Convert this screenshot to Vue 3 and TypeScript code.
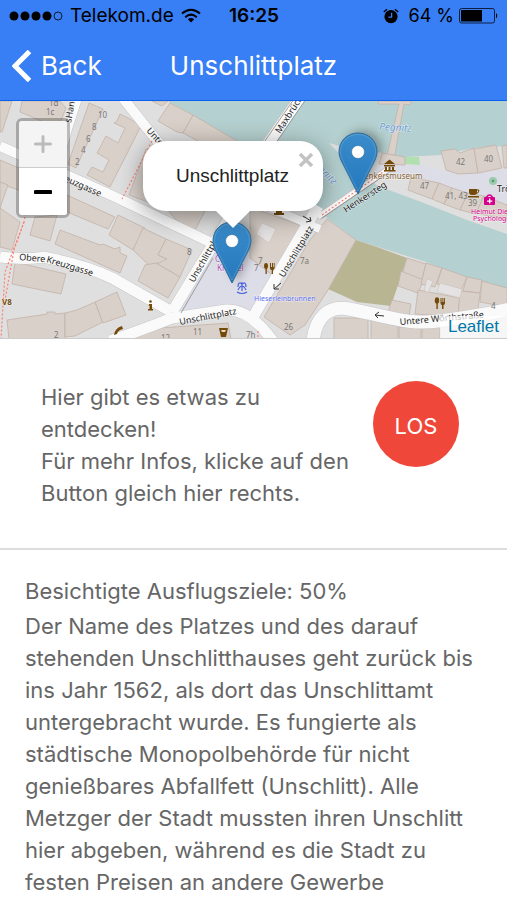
<script setup lang="ts">
import { ref } from 'vue'

interface MapLabel {
  text: string
  x: number
  y: number
  angle?: number
  kind?: string
}

const popupOpen = ref(true)
const place = 'Unschlittplatz'
const visited = 50

const buildings: string[] = [
  '22,101 60,101 66,108 58,128 20,112',
  '0,101 12,101 2,132 0,132',
  '89,103 103,109 76,168 68,164',
  '117,121 120,114 130,119 141,126 110,187 87,175 92,167 103,172 109,160 97,153 106,136 118,143 125,128 114,123',
  '170,103 193,115 183,133 177,132 158,121',
  '193,115 237,141 242,165 183,133',
  '152,101 168,101 162,106',
  '0,160 19,168 19,190 0,184',
  '0,182 8,185 0,208',
  '0,208 20,222 12,250 0,247',
  '35,217 57,215 50,241 30,235',
  '60,230 100,245 103,244 115,249 120,247 120,253 127,256 120,273 55,244',
  '67,195 115,217 108,229 67,212',
  '118,215 145,228 133,250 109,235',
  '15,262 66,274 61,294 12,284',
  '7,320 47,314 47,312 55,312 55,314 65,313 65,339 9,339',
  '65,313 77,310 95,302 103,322 75,336 65,337',
  '95,302 117,292 126,315 103,323',
  '146,149 170,160 156,205 129,195',
  '143,228 166,239 158,255 167,259 165,264 157,263 152,268 133,250',
  '166,239 192,250 180,277 157,264 167,259 158,255',
  '145,265 156,263 180,277 168,298 138,281',
  '165,207 205,211 195,230 178,222',
  '160,328 228,323 231,339 130,339 140,332',
  '250,207 305,227 275,277 250,258',
  '327,219 356,240 328,290 305,325 290,335 264,317 310,240',
  '334,318 368,318 368,339 334,339',
  '371,320 398,326 398,339 371,339',
  '399,327 421,328 421,339 399,339',
  '422,328 440,327 440,339 422,339',
  '378,101 412,101 410,105 404,104 398,137 395,155 387,155 399,104 378,104',
  '382,153 405,157 405,165 379,164',
  '441,151 455,149 460,153 474,148 478,173 458,174 446,170',
  '474,149 496,145 502,168 478,173',
  '502,146 507,145 507,168 504,168',
  '411,177 439,183 432,199 408,190',
  '439,183 452,188 444,204 432,199',
  '452,188 468,193 460,210 444,204',
  '468,193 484,196 476,214 460,210',
  '484,196 507,205 507,220 476,213',
  '407,258 426,264 421,284 402,275',
  '401,271 424,280 418,293 398,286',
  '426,263 442,268 435,287 421,284',
  '442,268 467,277 461,291 437,284',
  '392,300 411,304 409,316 388,312',
  '418,290 460,298 458,317 415,314',
  '467,277 482,280 480,293 463,291',
  '482,281 507,288 507,307 480,302',
  '460,291 480,293 477,318 458,316',
]

const roads: { d: string; w: number }[] = [
  { d: 'M0 146 C40 164 80 180 130 204 L216 245', w: 10 },
  { d: 'M78 98 L67 132 L58 165', w: 8 },
  { d: 'M122 97 L162 147 L180 158', w: 10 },
  { d: 'M0 257 Q30 260 43 257 Q85 265 112 278 L172 312', w: 11 },
  { d: 'M172 312 L206 256 L232 214', w: 11 },
  { d: 'M110 341 Q150 327 172 318 L226 310 Q250 308 275 344', w: 11 },
  { d: 'M318 206 L253 317', w: 11 },
  { d: 'M250 199 L320 229', w: 8 },
  { d: 'M313 342 C315 319 327 305 349 309 C391 317 408 325 438 321 S480 316 510 309', w: 13 },
  { d: 'M300 98 L263 151', w: 11 },
]

const footpaths: string[] = [
  'M152 141 L122 199',
  'M32 186 L24 222 L5 272 L1 339',
  'M24 222 L14 250 L5 300',
  'M322 215 L386 170',
  'M258 331 L258 339',
]

const labels: MapLabel[] = [
  { text: '1d', x: 49, y: 106, kind: 'num' },
  { text: '1c', x: 46, y: 115, kind: 'num' },
  { text: '10', x: 98, y: 118, kind: 'num' },
  { text: '8', x: 92, y: 130, kind: 'num' },
  { text: '6', x: 86, y: 142, kind: 'num' },
  { text: '4', x: 81, y: 153, kind: 'num' },
  { text: '2', x: 75, y: 165, kind: 'num' },
  { text: 'sHan', x: 71, y: 123, angle: -80 },
  { text: 'euzgasse', x: 64, y: 181, angle: 24 },
  { text: 'Unte', x: 146, y: 131, angle: 48 },
  { text: 'Obere', x: 19, y: 260, angle: 5 },
  { text: 'Kreuzgasse', x: 46, y: 262, angle: 17 },
  { text: 'Unschlittplatz', x: 194, y: 283, angle: -60 },
  { text: 'Unschlittplatz', x: 180, y: 325, angle: -11 },
  { text: 'Unschlittplatz', x: 284, y: 278, angle: -59 },
  { text: 'Maxbrück', x: 280, y: 134, angle: -57 },
  { text: 'Henkersteg', x: 346, y: 213, angle: -33 },
  { text: 'Untere Wörthstraße', x: 400, y: 325, angle: -5 },
  { text: 'Trö', x: 497, y: 192 },
  { text: 'V8', x: 2, y: 305, kind: 'poi' },
  { text: 'Henkersmuseum', x: 358, y: 179, kind: 'brown' },
  { text: 'Pegnitz', x: 379, y: 130, angle: 3, kind: 'river' },
  { text: 'Pegnitz', x: 310, y: 162, angle: 45, kind: 'river' },
  { text: '8', x: 187, y: 255, kind: 'num' },
  { text: '11', x: 193, y: 335, kind: 'num' },
  { text: '12', x: 161, y: 341, kind: 'num' },
  { text: '2', x: 54, y: 338, kind: 'num' },
  { text: '7', x: 258, y: 264, kind: 'num' },
  { text: '7', x: 254, y: 271, kind: 'num' },
  { text: '7a', x: 300, y: 264, kind: 'num' },
  { text: '26', x: 284, y: 330, kind: 'num' },
  { text: '7h', x: 246, y: 338, kind: 'num' },
  { text: '4', x: 491, y: 309, kind: 'num' },
  { text: '42', x: 456, y: 165, kind: 'num' },
  { text: '40', x: 484, y: 162, kind: 'num' },
  { text: '47', x: 420, y: 189, kind: 'num' },
  { text: '41, 43', x: 445, y: 199, kind: 'num' },
  { text: '39', x: 468, y: 206, kind: 'num' },
  { text: 'Helmut Diez', x: 471, y: 214, kind: 'pink' },
  { text: 'Psychologe', x: 473, y: 221, kind: 'pink' },
  { text: 'Hieserleinbrunnen', x: 254, y: 301, kind: 'blue' },
  { text: 'C', x: 215, y: 262, kind: 'shop' },
  { text: 'Kramel', x: 217, y: 271, kind: 'shop' },
]
</script>

<template>
  <div class="app">
    <header class="top">
      <div class="status">
        <div class="carrier">
          <svg width="54" height="12" viewBox="0 0 54 12" aria-hidden="true">
            <circle cx="5" cy="6" r="4.5" />
            <circle cx="16" cy="6" r="4.5" />
            <circle cx="27" cy="6" r="4.5" />
            <circle cx="38" cy="6" r="4.5" />
            <circle cx="49" cy="6" r="4" fill="none" stroke="#000" stroke-width="0.8" />
          </svg>
          <span>Telekom.de</span>
          <svg class="wifi" width="20" height="16" viewBox="0 0 20 16" aria-hidden="true">
            <path d="M1 5.6 Q10 -2.2 19 5.6" />
            <path d="M4.2 9.2 Q10 4 15.8 9.2" />
            <path class="dot" d="M6.8 11.3 Q10 8.6 13.2 11.3 L10 14.6 Z" />
          </svg>
        </div>
        <time class="clock">16:25</time>
        <div class="power">
          <svg width="16" height="16" viewBox="0 0 16 16" aria-hidden="true">
            <circle cx="8" cy="8.6" r="6.6" />
            <path d="M0.8 4 L4 1.2 M15.2 4 L12 1.2" stroke="#000" stroke-width="1.4" />
            <path d="M8.6 4.8 V9.2 H5.4" fill="none" stroke="#387ef5" stroke-width="1.3" />
          </svg>
          <span>64 %</span>
          <svg width="40" height="16" viewBox="0 0 40 16" aria-hidden="true">
            <rect x="0.5" y="0.5" width="35" height="14.5" rx="2" fill="none" stroke="#000" stroke-opacity="0.75" />
            <rect x="2" y="2" width="21" height="11.5" />
            <path d="M37 5 Q39.5 7.7 37 10.5 Z" />
          </svg>
        </div>
      </div>
      <nav class="nav">
        <button type="button" class="back">
          <svg width="20" height="32" viewBox="0 0 20 32" aria-hidden="true">
            <path d="M17.5 1.5 L3 16 L17.5 30.5" />
          </svg>
          <span>Back</span>
        </button>
        <h1>{{ place }}</h1>
      </nav>
    </header>

    <section class="map">
      <svg class="tiles" viewBox="0 101 507 237" preserveAspectRatio="xMidYMid slice" aria-hidden="true">
        <rect x="0" y="101" width="507" height="238" fill="#e0dfdf" />
        <path
          class="water"
          d="M167 101 H507 V146 L474 148 L441 155 L405 157 L382 153 L340 146 L329 143 L350 165 L378 186 L424 203 L467 220 L507 234 V290 L465 278 L426 262 L356 240 L327 218 L300 190 L260 160 L235 141 L193 115 Z"
        />
        <polygon points="379,165 420,165 446,171 459,175 507,169 507,205 468,193 411,177 368,178" fill="#dddde8" />
        <polygon points="233,222 257,243 278,276 252,316 230,309 181,318 176,312 214,250" fill="#dddde8" />
        <polygon points="356,240 377,247 407,258 391,306 357,302 328,289" fill="#b8b592" />
        <polygon points="405,157 419,157 420,165 405,164" fill="#b0e0b0" />
        <polygon v-for="(b, i) in buildings" :key="'b' + i" :points="b" class="building" />
        <path d="M262 223 L276 229 L269 243 L256 234 Z M427 279 L433 281 L428 293 L424 290 Z M440 283 L462 289 L460 298 L437 292 Z" fill="#e4e2e2" stroke="#c9bcb2" stroke-width="0.5" />

        <g class="casing">
          <path v-for="(r, i) in roads" :key="'c' + i" :d="r.d" :stroke-width="r.w + 1" />
          <path d="M318 217 L390 168" stroke-width="7" />
        </g>
        <g class="road">
          <path v-for="(r, i) in roads" :key="'r' + i" :d="r.d" :stroke-width="r.w" />
          <path d="M318 217 L390 168" stroke-width="5" />
        </g>
        <path d="M181 313 L213 258 M258 151 L294 99 M269 153 L306 99 M322 218 L388 173" class="edge" />
        <path v-for="(f, i) in footpaths" :key="'f' + i" :d="f" class="footpath" />

        <text
          v-for="(l, i) in labels"
          :key="'l' + i"
          :transform="`translate(${l.x} ${l.y}) rotate(${l.angle ?? 0})`"
          :class="['label', l.kind]"
        >{{ l.text }}</text>

        <g class="arrows">
          <path d="M281 283 L274 289 M274 289 V284 M274 289 L279 289" />
          <path d="M303 216 L311 221 M311 221 L310 217 M311 221 L306 222" />
          <path d="M384 316 L375 315 M375 315 L379 312 M375 315 L378 318" />
        </g>

        <g fill="#734a08">
          <path d="M384 164 L389.500 159.500 L395 164 Z M384 165 H395 V166.500 H384 Z M385 167 H387 V170 H385 Z M388.500 167 H390.500 V170 H388.500 Z M392 167 H394 V170 H392 Z M384 170 H395.500 V171.500 H384 Z" />
          <path d="M469 189 H477 V192 Q477 195 474 195 H472 Q469 195 469 192 Z M468 196 H479 V197.500 H468 Z" />
          <path d="M476 190 H479 Q479 193.500 476 193.500" fill="none" stroke="#734a08" />
          <path d="M274 213 H284 V215 H274 Z M276 209 H282 V214 H276 Z" />
          <path d="M219 328 H228 L226 337 H221 Z" />
          <path d="M221 330 H226 L225 332 H222 Z" fill="#e9dcc6" />
          <path d="M149 304 H152 V309 H153 V310.500 H148 V309 H149.500 V305.500 H148.500 Z" />
          <circle cx="150.500" cy="301.500" r="1.300" />
          <path d="M114 335 Q115 328 122 326 L123 329 L120 330 Q117 332 117 334 Z" />
          <ellipse cx="266" cy="266" rx="2" ry="3" />
          <path d="M265.500 267 H266.800 V274 H265.500 Z M270 263 H271 V267 H272 V263 H273 V267 H273.800 V263 H274.600 V268 Q274 270 273 270 V274 H271.700 V270 Q270 270 270 268 Z" />
          <ellipse cx="437" cy="300.500" rx="2.200" ry="3.200" />
          <path d="M436.400 302 H437.800 V309 H436.400 Z M440.500 298 H441.500 V302 H442.400 V298 H443.400 V302 H444.200 V298 H445 V303 Q445 305 443.500 305 V309 H442 V305 Q440.500 305 440.500 303 Z" />
        </g>
        <g stroke="#4660e0" stroke-width="1.200" fill="none">
          <path d="M237 292 Q242 295 247 292 M242 291 V283 M242 284 Q238 281 238 287 M242 284 Q246 281 246 287 M238 290 Q242 282 246 290 M239 283 H245" />
        </g>
        <g fill="#d6008c">
          <rect x="484" y="197" width="11" height="8" rx="1" />
          <path d="M486.500 197 Q489.500 193 492.500 197" fill="none" stroke="#d6008c" stroke-width="1.400" />
          <path d="M489 198.500 H490.300 V200.400 H492.200 V201.700 H490.300 V203.600 H489 V201.700 H487.100 V200.400 H489 Z" fill="#fff" />
        </g>
        <circle cx="493" cy="181" r="4" fill="#9dc9ac" />
        <circle cx="493" cy="181" r="1.300" fill="#4f9c6e" />
      </svg>

      <div class="zoom">
        <button type="button" disabled aria-label="Zoom in">
          <svg width="18" height="18" viewBox="0 0 18 18"><path d="M9 1.500 V16.500 M1.500 9 H16.500" stroke="#bbb" stroke-width="3" stroke-linecap="round" /></svg>
        </button>
        <button type="button" aria-label="Zoom out">
          <svg width="18" height="18" viewBox="0 0 18 18"><path d="M1.500 9 H16.500" stroke="#000" stroke-width="4" stroke-linecap="round" /></svg>
        </button>
      </div>

      <svg v-for="n in 2" :key="n" :class="['pin', 'pin-' + n]" width="42" height="64" viewBox="0 0 42 64" aria-hidden="true">
        <defs>
          <linearGradient :id="'pin-fill-' + n" x1="0" y1="0" x2="0" y2="1">
            <stop offset="0" stop-color="#3a8ccb" />
            <stop offset="1" stop-color="#2479bd" />
          </linearGradient>
        </defs>
        <path
          d="M21 1 C10 1 2 9.500 2 19.500 C2 26 6 32 9 38 L21 62 L33 38 C36 32 40 26 40 19.500 C40 9.500 32 1 21 1 Z"
          :fill="`url(#pin-fill-${n})`"
          stroke="#2e6c97"
        />
        <path d="M21 2.500 C11 2.500 3.500 10 3.500 19.500 C3.500 25 7 31 10 37 L21 59 L32 37 C35 31 38.500 25 38.500 19.500 C38.500 10 31 2.500 21 2.500 Z" fill="none" stroke="#fff" stroke-opacity="0.150" />
        <circle cx="21" cy="20" r="6.500" fill="#fff" stroke="#2e6c97" stroke-opacity="0.600" />
      </svg>

      <div v-if="popupOpen" class="popup">
        <span>{{ place }}</span>
        <button type="button" class="close" aria-label="Close" @click="popupOpen = false">
          <svg width="16" height="16" viewBox="0 0 16 16"><path d="M2 2 L14 14 M14 2 L2 14" stroke="#c3c3c3" stroke-width="3.500" /></svg>
        </button>
        <svg class="tip" width="34" height="18" viewBox="0 0 34 18" aria-hidden="true"><path d="M0 0 H34 L17 17 Z" fill="#fff" /></svg>
      </div>

      <a class="credit" href="#">Leaflet</a>
    </section>

    <section class="intro">
      <p>Hier gibt es etwas zu entdecken!<br />Für mehr Infos, klicke auf den Button gleich hier rechts.</p>
      <button type="button" class="go">LOS</button>
    </section>

    <section class="story">
      <p class="progress">Besichtigte Ausflugsziele: {{ visited }}%</p>
      <p>
        Der Name des Platzes und des darauf stehenden Unschlitthauses geht zurück bis ins Jahr 1562,
        als dort das Unschlittamt untergebracht wurde. Es fungierte als städtische Monopolbehörde für
        nicht genießbares Abfallfett (Unschlitt). Alle Metzger der Stadt mussten ihren Unschlitt hier
        abgeben, während es die Stadt zu festen Preisen an andere Gewerbe
      </p>
    </section>
  </div>
</template>

<style>
body {
  margin: 0;
  background: #fff;
}
</style>

<style scoped>
.app {
  min-height: 100vh;
  font-family: Inter, "Liberation Sans", sans-serif;
  font-size: 22px;
  line-height: 32px;
  color: #666;
}

button {
  margin: 0;
  padding: 0;
  border: 0;
  background: none;
  font: inherit;
  color: inherit;
}

svg {
  display: block;
}

p,
h1 {
  margin: 0;
}

.top {
  background: #387ef5;
  border-bottom: 1px solid #0c60ee;
}

.status {
  display: grid;
  grid-template-columns: 1fr auto 1fr;
  align-items: center;
  height: 32px;
  padding: 0 8px 0 9px;
  font-size: 19px;
  color: #000;
}

.carrier,
.power {
  display: flex;
  align-items: center;
}

.carrier {
  gap: 7px;
}

.power {
  justify-content: flex-end;
  gap: 5px;
  font-size: 18px;
}

.power span {
  margin-left: 4px;
}

.wifi path {
  fill: none;
  stroke: #000;
  stroke-width: 2;
}

.wifi .dot {
  fill: #000;
  stroke: none;
}

.clock {
  font-weight: 600;
}

.nav {
  display: grid;
  grid-template-columns: 1fr auto 1fr;
  align-items: center;
  height: 68px;
  padding: 0 12px;
  color: #fff;
  font-size: 26px;
}

.back {
  display: flex;
  align-items: center;
  gap: 9px;
}

.back path {
  fill: none;
  stroke: #fff;
  stroke-width: 5;
}

.nav h1 {
  font-size: 26px;
  font-weight: 400;
}

.map {
  position: relative;
  height: 237px;
  overflow: hidden;
  border-bottom: 1px solid #ccc;
  font-family: "Liberation Sans", Arial, sans-serif;
}

.tiles {
  width: 100%;
  height: 100%;
}

.water {
  fill: #b5d0d0;
}

.building {
  fill: #d9d0c9;
  stroke: #c2b3a8;
  stroke-width: 0.8;
}

.casing path {
  fill: none;
  stroke: #c8c6c6;
}

.road path {
  fill: none;
  stroke: #fafafa;
}

.edge {
  fill: none;
  stroke: #888;
  stroke-width: 0.8;
}

.footpath {
  fill: none;
  stroke: #fa8072;
  stroke-width: 1.2;
  stroke-dasharray: 2 2;
}

.label {
  font-family: "Noto Sans", "DejaVu Sans", sans-serif;
  font-size: 9px;
  fill: #222;
  stroke: #fff;
  stroke-width: 1;
  stroke-opacity: 0.6;
  paint-order: stroke;
}

.label.num {
  font-size: 8px;
  fill: #777;
  stroke: none;
}

.label.poi {
  font-size: 8px;
  font-weight: 700;
  fill: #734a08;
}

.label.brown {
  font-size: 8px;
  fill: #84602c;
}

.label.river {
  font-size: 10px;
  font-style: italic;
  fill: #6c9bd2;
}

.label.pink {
  font-size: 7px;
  fill: #d6008c;
}

.label.blue {
  font-size: 7px;
  fill: #5a6cf0;
}

.label.shop {
  font-size: 8px;
  fill: #b04fc0;
}

.arrows path {
  fill: none;
  stroke: #333;
}

.zoom {
  position: absolute;
  top: 17px;
  left: 16px;
  display: grid;
  border: 3px solid rgba(0, 0, 0, 0.25);
  border-radius: 6px;
  background-clip: padding-box;
}

.zoom button {
  display: grid;
  place-items: center;
  width: 48px;
  height: 47px;
  background: #fff;
  border-radius: 0 0 3px 3px;
}

.zoom button:first-child {
  background: #f4f4f4;
  border-bottom: 1px solid #ccc;
  border-radius: 3px 3px 0 0;
}

.pin {
  position: absolute;
  filter: drop-shadow(5px -2px 5px rgba(0, 0, 0, 0.3));
}

.pin-1 {
  top: 120px;
  left: calc(50% - 43px);
}

.pin-2 {
  top: 31px;
  left: calc(50% + 83px);
}

.popup {
  position: absolute;
  top: 40px;
  left: calc(50% - 111px);
  display: grid;
  place-items: center;
  width: 180px;
  height: 70px;
  border-radius: 23px;
  background: #fff;
  box-shadow: 0 5px 24px rgba(0, 0, 0, 0.4);
  font-size: 19px;
  color: #222;
}

.close {
  position: absolute;
  top: 11px;
  right: 9px;
}

.tip {
  position: absolute;
  top: 100%;
  left: calc(50% - 17px);
}

.credit {
  position: absolute;
  right: 0;
  bottom: 0;
  padding: 0 8px;
  background: rgba(255, 255, 255, 0.7);
  font-size: 17px;
  line-height: 22px;
  color: #0078a8;
  text-decoration: none;
}

.intro {
  display: flex;
  align-items: flex-start;
  gap: 20px;
  padding: 42px 48px 39px 41px;
  border-bottom: 2px solid #ddd;
}

.intro p {
  flex: 1;
}

.go {
  flex: none;
  width: 86px;
  height: 86px;
  padding-top: 4px;
  border-radius: 50%;
  background: #ef473a;
  color: #fff;
}

.story {
  padding: 25px 26px 4px 25px;
}

.progress {
  margin-bottom: 3px;
}
</style>
